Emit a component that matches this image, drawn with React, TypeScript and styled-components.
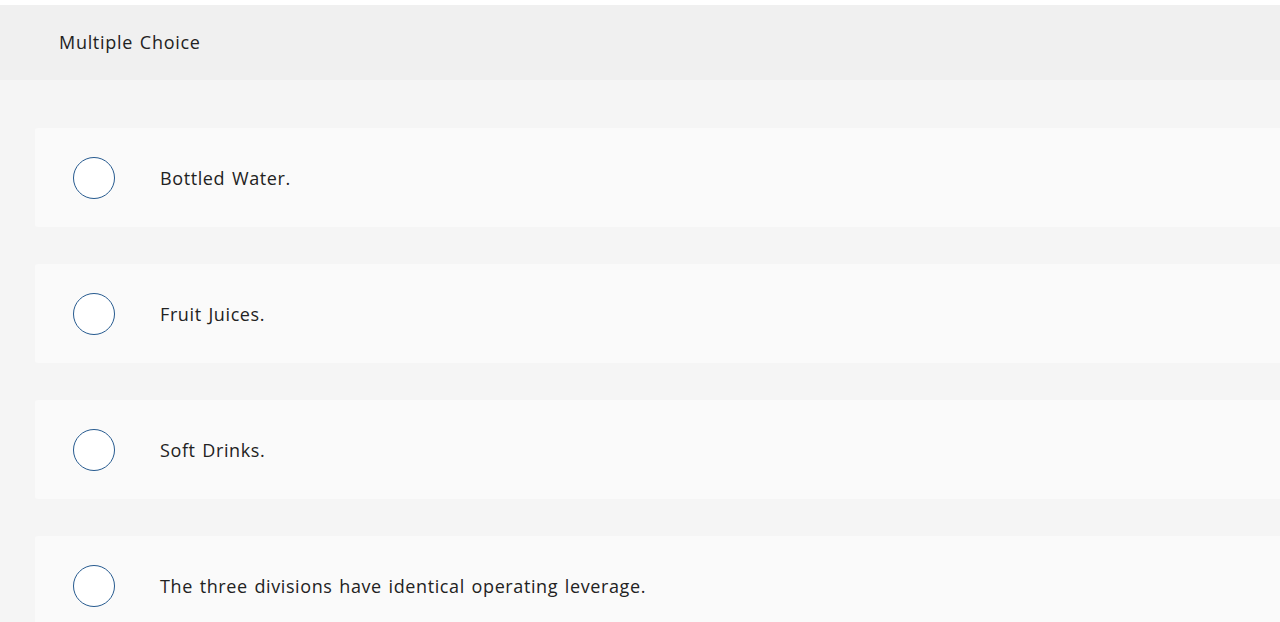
import React, { useState } from 'react';
import styled, { createGlobalStyle } from 'styled-components';

const GlobalStyle = createGlobalStyle`
    html, body {
        margin: 0;
        padding: 0;
        background: #f5f5f5;
        font-family: 'Open Sans', Lato, Arial, sans-serif;
    }
`;

const Page = styled.div`
    padding-top: 5px;
    background: #ffffff;
    min-height: 100vh;
`;

const Header = styled.div`
    height: 74px;
    padding-bottom: 1px;
    display: flex;
    align-items: center;
    padding-left: 59px;
    background: #f0f0f0;
    font-size: 18px;
    letter-spacing: 0.7px;
    word-spacing: 1.5px;
    color: #222;
`;

const Body = styled.div`
    background: #f5f5f5;
    padding: 48px 0 40px 35px;
    display: flex;
    flex-direction: column;
    gap: 37px;
`;

const Option = styled.label`
    height: 99px;
    display: flex;
    align-items: center;
    padding-left: 38px;
    background: #fafafa;
    border-radius: 3px 0 0 3px;
    cursor: pointer;
`;

const Radio = styled.span<{ $checked: boolean }>`
    box-sizing: border-box;
    width: 42px;
    height: 42px;
    border-radius: 50%;
    border: 1.5px solid #265a8f;
    background: ${(p) => (p.$checked ? '#265a8f' : '#ffffff')};
    box-shadow: ${(p) => (p.$checked ? 'inset 0 0 0 6px #fff' : 'none')};
    flex-shrink: 0;
`;

const OptionText = styled.span`
    margin-left: 45px;
    font-size: 18px;
    letter-spacing: 0.6px;
    word-spacing: 1.5px;
    color: #222;
`;

const choices = [
    'Bottled Water.',
    'Fruit Juices.',
    'Soft Drinks.',
    'The three divisions have identical operating leverage.',
];

function App() {
    const [selected, setSelected] = useState(-1);

    return (
        <Page>
            <GlobalStyle />
            <Header>Multiple Choice</Header>
            <Body>
                {choices.map((choice, i) => (
                    <Option key={choice} onClick={() => setSelected(i)}>
                        <Radio $checked={selected === i} />
                        <OptionText>{choice}</OptionText>
                    </Option>
                ))}
            </Body>
        </Page>
    );
}

export default App;
